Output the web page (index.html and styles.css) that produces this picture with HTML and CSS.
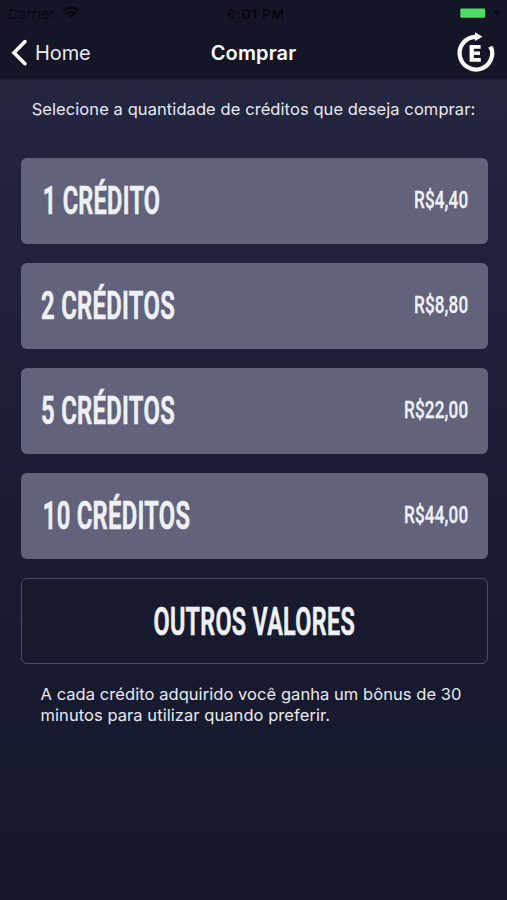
FILE: index.html
```html
<!DOCTYPE html>
<html lang="pt-BR">
<head>
<meta charset="utf-8">
<title>Comprar</title>
<link rel="stylesheet" href="styles.css">
</head>
<body>
<header class="header">
  <div class="status">
    <div class="carrier"><span>Carrier</span>
      <svg width="18" height="13" viewBox="0 0 18 13" fill="none" stroke="#05060e" stroke-width="2.4"><path d="M1.3 4.8a11 11 0 0 1 15.4 0M4.2 8a7 7 0 0 1 9.6 0"/><path d="M9 12.6 6.3 10a4 4 0 0 1 5.4 0z" fill="#05060e" stroke="none"/></svg>
    </div>
    <span class="time">6:01 PM</span>
    <div class="power">
      <svg width="42" height="14" viewBox="0 0 42 14"><rect x=".5" y="1.5" width="29" height="11" rx="2.5" fill="none" stroke="#101221"/><rect x="2.3" y="2.4" width="24.8" height="9.4" rx="1.3" fill="#4cdb63"/><path d="M30.8 5v4q1.2-.6 1.2-2t-1.2-2z" fill="#101221"/><path d="m39.8 2.5-4.5 5h3l-1.1 4.2L41.7 6h-3z" fill="#05060e"/></svg>
    </div>
  </div>
  <nav class="nav">
    <a class="back"><svg width="17" height="28" viewBox="0 0 17 28" fill="none" stroke="#fff" stroke-width="3.6" stroke-linecap="round"><path d="M14 2.6 3 13.7l11 11"/></svg><span>Home</span></a>
    <h1 class="title">Comprar</h1>
    <svg class="logo" width="40" height="42" viewBox="0 0 40 42"><path d="M36.1 15.2A16.3 16.3 0 1 1 20.5 4.9" fill="none" stroke="#fff" stroke-width="4.2"/><path d="M33.4 15.6l3.8-1.8 1 3.5-4 .8zM20 .3l7.5 4.4-7.5 4.2z" fill="#fff"/><path d="M14.6 12.9h11v3.8h-6.8v2.7h6.2v3.5h-6.2v3.1h7v3.8H14.6z" fill="#fff"/></svg>
  </nav>
</header>
<main class="main">
  <p class="intro">Selecione a quantidade de créditos que deseja comprar:</p>
  <div class="options">
    <button class="card"><svg class="label" width="280" height="54"><text x="1.8" y="39.5" textLength="117.5" lengthAdjust="spacingAndGlyphs">1 CRÉDITO</text></svg><svg class="price" width="130" height="30"><text x="76" y="22.3" textLength="54.3" lengthAdjust="spacingAndGlyphs">R$4,40</text></svg></button>
    <button class="card"><svg class="label" width="280" height="54"><text x="0" y="39.5" textLength="134" lengthAdjust="spacingAndGlyphs">2 CRÉDITOS</text></svg><svg class="price" width="130" height="30"><text x="76" y="22.3" textLength="54.3" lengthAdjust="spacingAndGlyphs">R$8,80</text></svg></button>
    <button class="card"><svg class="label" width="280" height="54"><text x="0" y="39.5" textLength="134" lengthAdjust="spacingAndGlyphs">5 CRÉDITOS</text></svg><svg class="price" width="130" height="30"><text x="66" y="22.3" textLength="64.3" lengthAdjust="spacingAndGlyphs">R$22,00</text></svg></button>
    <button class="card"><svg class="label" width="280" height="54"><text x="1.8" y="39.5" textLength="147.5" lengthAdjust="spacingAndGlyphs">10 CRÉDITOS</text></svg><svg class="price" width="130" height="30"><text x="66" y="22.3" textLength="64.3" lengthAdjust="spacingAndGlyphs">R$44,00</text></svg></button>
    <button class="card other"><svg class="label" width="424" height="54"><text x="111.5" y="40.5" textLength="201.5" lengthAdjust="spacingAndGlyphs">OUTROS VALORES</text></svg></button>
  </div>
  <p class="note"><span class="line first">A cada crédito adquirido você ganha um bônus de 30</span> <span class="line">minutos para utilizar quando preferir.</span></p>
</main>
</body>
</html>
```

FILE: styles.css
```css
* { box-sizing: border-box; }
body {
  margin: 0;
  height: 900px;
  overflow: hidden;
  font-family: Inter, "Liberation Sans", sans-serif;
  color: #e9e9f2;
  background: linear-gradient(#141628 0, #141628 79px, #24253f 80px, #1f203b 300px, #191b32 560px, #161a2c 800px, #15162a 900px);
}
.header { height: 79px; }
.status {
  display: grid;
  grid-template-columns: 1fr auto 1fr;
  align-items: center;
  height: 27px;
  padding: 0 7px 0 8px;
  font-size: 13.5px;
  color: #05060e;
}
.carrier { display: flex; align-items: center; gap: 7px; letter-spacing: .35px; }
.carrier svg { margin-top: -2px; }
.time { font-weight: 600; font-size: 13.5px; letter-spacing: .8px; }
.time { margin-right: -4px; }
.power { display: flex; justify-content: flex-end; margin-top: -1px; }
.nav {
  display: grid;
  grid-template-columns: 1fr auto 1fr;
  align-items: center;
  height: 51px;
  padding: 0 11px;
}
.back { display: flex; align-items: center; gap: 7px; font-size: 20px; letter-spacing: -.1px; }
.title { margin: 0; font-size: 20px; font-weight: 600; color: #fff; letter-spacing: .15px; }
.logo { justify-self: end; margin-right: 1px; }
.intro {
  margin: 0;
  padding-top: 20px;
  height: 79px;
  text-align: center;
  font-size: 16.5px;
  letter-spacing: .08px;
  line-height: 20px;
}
.options { display: flex; flex-direction: column; gap: 19px; padding: 0 19.5px 0 20.5px; }
.card {
  display: flex;
  align-items: center;
  justify-content: space-between;
  height: 86px;
  padding: 0 20px;
  border: 0;
  border-radius: 6px;
  background: #62637b;
}
.other { justify-content: center; background: #181a2e; border: 1.5px solid #4d4c63; }
.label, .price { flex: none; overflow: visible; }
.price { margin-left: -20px; }
.label text, .price text {
  font-family: Roboto, sans-serif;
  font-weight: 600;
  fill: #eff1f8;
  stroke: #eff1f8;
}
.label text { font-size: 39px; stroke-width: .7px; letter-spacing: .5px; }
.price text { font-size: 24.5px; font-weight: 500; stroke-width: .3px; letter-spacing: .2px; }
.note { margin: 0; padding: 20px 40.5px; font-size: 16.5px; line-height: 21px; letter-spacing: .06px; }
.line { display: block; white-space: nowrap; }
```
